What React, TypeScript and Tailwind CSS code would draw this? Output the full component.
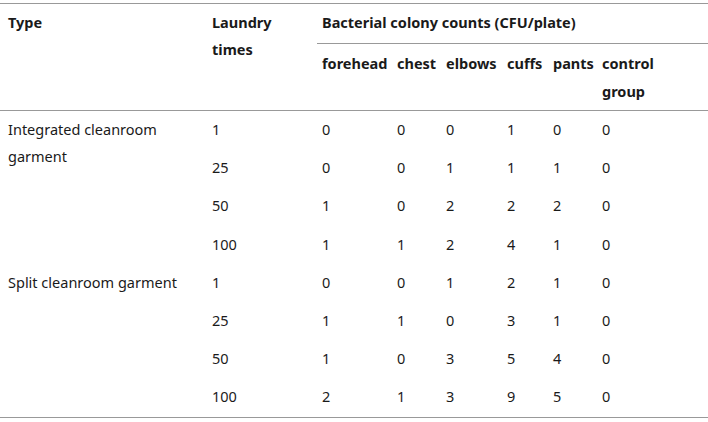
import React from 'react'

// Bacterial colony counts table
const ROWS: { type: string; times: string; vals: string[] }[] = [
  { type: 'Integrated cleanroom garment', times: '1', vals: ['0', '0', '0', '1', '0', '0'] },
  { type: '', times: '25', vals: ['0', '0', '1', '1', '1', '0'] },
  { type: '', times: '50', vals: ['1', '0', '2', '2', '2', '0'] },
  { type: '', times: '100', vals: ['1', '1', '2', '4', '1', '0'] },
  { type: 'Split cleanroom garment', times: '1', vals: ['0', '0', '1', '2', '1', '0'] },
  { type: '', times: '25', vals: ['1', '1', '0', '3', '1', '0'] },
  { type: '', times: '50', vals: ['1', '0', '3', '5', '4', '0'] },
  { type: '', times: '100', vals: ['2', '1', '3', '9', '5', '0'] },
]

const SUB = ['forehead', 'chest', 'elbows', 'cuffs', 'pants', 'control group']

const COLS = 'grid grid-cols-[207px_110px_75px_49px_61px_46px_49px_1fr]'

export default function App() {
  return (
    <div className="w-[708px] h-[422px] bg-white pt-[3px] text-[14.5px] text-[#1a1a1a] font-['Noto_Sans',sans-serif]">
      <div className="border-t border-b border-[#999]">
        {/* Header */}
        <div className={`${COLS} border-b border-[#999] font-bold`}>
          <div className="row-span-2 pl-[8px] pt-[4.5px] leading-[27.5px]">Type</div>
          <div className="row-span-2 pl-[5px] pt-[4.5px] leading-[27.5px]">
            Laundry
            <br />
            times
          </div>
          <div className="col-span-6 h-[40px] pl-[5px] pt-[4.5px] leading-[27px] border-b border-[#999]">
            Bacterial colony counts (CFU/plate)
          </div>
          {SUB.map(s => (
            <div key={s} className="h-[66px] pl-[5px] pt-[4.5px] leading-[28px]">
              {s === 'control group' ? (<>control<br />group</>) : s}
            </div>
          ))}
        </div>

        {/* Body */}
        <div className={`${COLS} auto-rows-[38.2px]`}>
          {ROWS.map((r, i) => (
            <React.Fragment key={i}>
              {r.type && (
                <div className="row-span-4 pl-[8px] pt-[5px] leading-[27px] pr-[20px]">{r.type}</div>
              )}
              <div className="pl-[5px] pt-[5px] leading-[27px]">{r.times}</div>
              {r.vals.map((v, j) => (
                <div key={j} className="pl-[5px] pt-[5px] leading-[27px]">{v}</div>
              ))}
            </React.Fragment>
          ))}
        </div>
      </div>
    </div>
  )
}
